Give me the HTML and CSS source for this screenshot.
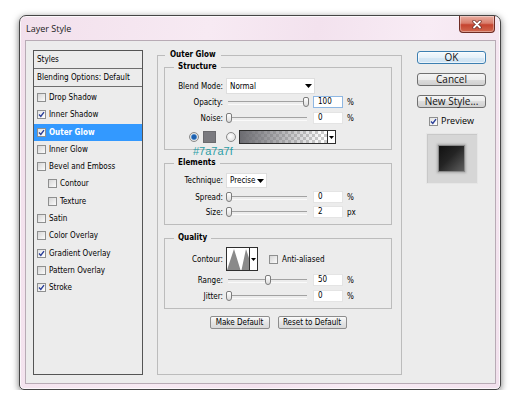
FILE: index.html
```html
<!DOCTYPE html>
<html>
<head>
<meta charset="utf-8">
<title>Layer Style</title>
<link rel="stylesheet" href="styles.css">
</head>
<body>
<div class="window">
  <div class="titlebar">
    <span class="title">Layer Style</span>
    <div class="close">
      <svg width="10" height="9" viewBox="0 0 10 9"><path d="M2 1.5 L8 7.5 M8 1.5 L2 7.5" stroke="#6a2a22" stroke-width="3.2" stroke-linecap="round"/><path d="M2 1.5 L8 7.5 M8 1.5 L2 7.5" stroke="#fff" stroke-width="1.8" stroke-linecap="round"/></svg>
    </div>
  </div>
  <div class="client">
    <div class="styles-panel">
      <div class="sp-head">Styles</div>
      <div class="sp-blend">Blending Options: Default</div>
      <div class="sp-list">
        <div class="sp-item"><span class="cb"></span>Drop Shadow</div>
        <div class="sp-item"><span class="cb on"><svg viewBox="0 0 7 7"><path d="M1 3.6 L2.8 5.4 L6 1.2" stroke="#2a3f9a" stroke-width="1.4" fill="none"/></svg></span>Inner Shadow</div>
        <div class="sp-item sel"><span class="cb on"><svg viewBox="0 0 7 7"><path d="M1 3.6 L2.8 5.4 L6 1.2" stroke="#2a3f9a" stroke-width="1.4" fill="none"/></svg></span>Outer Glow</div>
        <div class="sp-item"><span class="cb"></span>Inner Glow</div>
        <div class="sp-item"><span class="cb"></span>Bevel and Emboss</div>
        <div class="sp-item sub"><span class="cb"></span>Contour</div>
        <div class="sp-item sub"><span class="cb"></span>Texture</div>
        <div class="sp-item"><span class="cb"></span>Satin</div>
        <div class="sp-item"><span class="cb"></span>Color Overlay</div>
        <div class="sp-item"><span class="cb on"><svg viewBox="0 0 7 7"><path d="M1 3.6 L2.8 5.4 L6 1.2" stroke="#2a3f9a" stroke-width="1.4" fill="none"/></svg></span>Gradient Overlay</div>
        <div class="sp-item"><span class="cb"></span>Pattern Overlay</div>
        <div class="sp-item"><span class="cb on"><svg viewBox="0 0 7 7"><path d="M1 3.6 L2.8 5.4 L6 1.2" stroke="#2a3f9a" stroke-width="1.4" fill="none"/></svg></span>Stroke</div>
      </div>
    </div>

    <fieldset class="group main">
      <legend class="lg-main">Outer Glow</legend>

      <fieldset class="group subgroup structure">
        <legend>Structure</legend>
        <div class="row r-select">
          <span class="lbl">Blend Mode:</span>
          <div class="select blend"><span>Normal</span><svg width="7" height="4" viewBox="0 0 7 4"><path d="M0 0 H7 L3.5 4 Z" fill="#000"/></svg></div>
        </div>
        <div class="row r-num first">
          <span class="lbl">Opacity:</span>
          <div class="slider"><span class="thumb" style="left:77px"></span></div>
          <div class="num focus">100</div><span class="unit">%</span>
        </div>
        <div class="row r-num">
          <span class="lbl">Noise:</span>
          <div class="slider"><span class="thumb" style="left:0px"></span></div>
          <div class="num">0</div><span class="unit">%</span>
        </div>
        <div class="row r-color">
          <span class="radio on"></span>
          <span class="swatch"></span>
          <span class="radio"></span>
          <div class="grad"><span class="grad-fill"></span><span class="grad-arrow"><svg width="5" height="3" viewBox="0 0 5 3"><path d="M0 0 H5 L2.5 3 Z" fill="#000"/></svg></span></div>
        </div>
        <span class="hex">#7a7a7f</span>
      </fieldset>

      <fieldset class="group subgroup elements">
        <legend>Elements</legend>
        <div class="row r-select2">
          <span class="lbl">Technique:</span>
          <div class="select tech"><span>Precise</span><svg width="7" height="4" viewBox="0 0 7 4"><path d="M0 0 H7 L3.5 4 Z" fill="#000"/></svg></div>
        </div>
        <div class="row r-num first3">
          <span class="lbl">Spread:</span>
          <div class="slider"><span class="thumb" style="left:0px"></span></div>
          <div class="num">0</div><span class="unit">%</span>
        </div>
        <div class="row r-num first3">
          <span class="lbl">Size:</span>
          <div class="slider"><span class="thumb" style="left:0px"></span></div>
          <div class="num">2</div><span class="unit">px</span>
        </div>
      </fieldset>

      <fieldset class="group subgroup quality">
        <legend>Quality</legend>
        <div class="row r-contour">
          <span class="lbl">Contour:</span>
          <div class="contour">
            <span class="contour-img"><svg width="22" height="22" viewBox="0 0 22 22"><path d="M0 22 L7 1 L13.5 22 Z M14.5 22 L19 1 L22 10 L22 22 Z" fill="#8a8a8a"/></svg></span>
            <span class="contour-arrow"><svg width="5" height="3" viewBox="0 0 5 3"><path d="M0 0 H5 L2.5 3 Z" fill="#000"/></svg></span>
          </div>
          <span class="cb aa"></span><span class="aa-text">Anti-aliased</span>
        </div>
        <div class="row r-num first3">
          <span class="lbl">Range:</span>
          <div class="slider"><span class="thumb" style="left:39px"></span></div>
          <div class="num">50</div><span class="unit">%</span>
        </div>
        <div class="row r-num">
          <span class="lbl">Jitter:</span>
          <div class="slider"><span class="thumb" style="left:0px"></span></div>
          <div class="num">0</div><span class="unit">%</span>
        </div>
      </fieldset>

      <div class="defaults">
        <button class="btn-sm w60">Make Default</button>
        <button class="btn-sm w69">Reset to Default</button>
      </div>
    </fieldset>

    <div class="side">
      <button class="btn ok">OK</button>
      <button class="btn">Cancel</button>
      <button class="btn">New Style...</button>
      <div class="preview-row"><span class="cb on"><svg viewBox="0 0 7 7"><path d="M1 3.6 L2.8 5.4 L6 1.2" stroke="#2a3f9a" stroke-width="1.4" fill="none"/></svg></span><span>Preview</span></div>
      <div class="preview-box"><span class="preview-sq"></span></div>
    </div>
  </div>
</div>
</body>
</html>
```

FILE: styles.css
```css
* { box-sizing: border-box; }
html, body { margin: 0; padding: 0; background: #fff; }
body {
  font-family: "DejaVu Sans Condensed", "DejaVu Sans", sans-serif;
  font-size: 8px;
  color: #000;
  overflow: hidden;
}

.window {
  margin: 15px 0 0 19px;
  width: 482px;
  height: 375px;
  border: 1px solid #454545;
  border-radius: 7px 7px 5px 5px;
  background: linear-gradient(100deg, #f2e0ec 0%, #f7eaf3 35%, #f3e2ee 55%, #f8ecf5 75%, #f2e1ed 100%);
  box-shadow: 0 2px 7px rgba(0,0,0,0.55), inset 0 0 0 1px rgba(255,255,255,0.75);
  padding: 0 4px 5px 5px;
  display: flex;
  flex-direction: column;
}

.titlebar {
  height: 24px;
  flex: none;
  display: flex;
  align-items: flex-start;
}
.title {
  font-family: "Open Sans", sans-serif;
  font-size: 9px;
  line-height: 25px;
  color: #1a1a1a;
  padding-left: 1px;
}
.close {
  margin-left: auto;
  margin-right: 1px;
  width: 36px;
  height: 17px;
  border: 1px solid #6e2c24;
  border-top: none;
  border-radius: 0 0 4px 4px;
  background: linear-gradient(#e9aea2 0%, #d97d6b 45%, #c5432f 55%, #d1684f 100%);
  box-shadow: inset 0 0 0 1px rgba(255,255,255,0.35);
  display: flex;
  align-items: center;
  justify-content: center;
}
.close svg { display: block; }

.client {
  height: 344px;
  flex: none;
  background: #ececec;
  border: 1px solid #b8abb5;
  display: flex;
  align-items: stretch;
  padding: 9px 9px 8px 7px;
}

/* Styles list */
.styles-panel {
  width: 110px;
  flex: none;
  border: 1px solid #555;
  background: #ececec;
}
.sp-head, .sp-blend {
  height: 18px;
  border-bottom: 1px solid #6e6e6e;
  padding-left: 3px;
  line-height: 17px;
  white-space: nowrap;
}
.sp-list { padding-top: 2px; }
.sp-item {
  height: 17.27px;
  display: flex;
  align-items: center;
  gap: 3px;
  padding-left: 3px;
  white-space: nowrap;
}
.sp-item.sub { padding-left: 14px; }
.sp-item.sel { background: #3399ff; color: #fff; font-weight: bold; }

.cb {
  width: 9px;
  height: 9px;
  flex: none;
  border: 1px solid #8e8f8f;
  background: linear-gradient(135deg, #d6d6d6, #fbfbfb);
  display: flex;
  align-items: center;
  justify-content: center;
}
.cb.on { background: linear-gradient(135deg, #e4e4e4, #fff); }
.cb svg { width: 7px; height: 7px; display: block; }

/* group boxes */
.group {
  margin: 0;
  border: 1px solid #bcbcbc;
  min-width: 0;
}
.group legend {
  font-weight: bold;
  line-height: 10px;
  padding: 0 4px;
  margin-left: 9px;
}
.main {
  width: 245px;
  flex: none;
  margin-left: 14px;
  padding: 2px 9px 0 6px;
}
.main > legend.lg-main {
  padding: 0 5px;
  margin-left: 1px;
}
.subgroup {
  padding: 0 0 6px 0;
  position: relative;
}
.structure { padding-bottom: 5px; }
.elements, .quality { margin-top: 8px; }

.row { display: flex; align-items: center; }
.lbl {
  width: 58px;
  flex: none;
  text-align: right;
  margin-right: 3px;
  white-space: nowrap;
}
.r-select { margin-top: 6px; height: 16px; }
.r-select2 { margin-top: 5px; height: 15px; }
.r-num { height: 12px; margin-top: 4px; }
.r-num.first { margin-top: 2px; }
.r-num.first3 { margin-top: 3px; }
.r-color { margin-top: 6px; height: 14px; padding-left: 24px; }
.r-contour { margin-top: 4px; height: 24px; }

.select {
  background: #fff;
  border: 1px solid #dedede;
  display: flex;
  align-items: center;
  justify-content: space-between;
  padding: 0 2px 0 3px;
}
.select svg { display: block; }
.blend { width: 89px; height: 16px; }
.tech { width: 41px; height: 15px; }

.slider {
  width: 84px;
  height: 12px;
  flex: none;
  position: relative;
  margin-right: 3px;
}
.slider::before {
  content: "";
  position: absolute;
  left: 2px;
  right: 3px;
  top: 5px;
  height: 2px;
  border-top: 1px solid #a2a2a2;
  border-bottom: 1px solid #fafafa;
}
.thumb {
  position: absolute;
  top: 1px;
  width: 6px;
  height: 10px;
  border: 1px solid #7c7c7c;
  border-radius: 2px 2px 3px 3px;
  background: linear-gradient(#ffffff, #dcdcdc);
}

.num {
  width: 30px;
  height: 12px;
  flex: none;
  background: #fff;
  border: 1px solid #e4e4e4;
  padding-left: 4px;
  line-height: 10px;
}
.num.focus { border-color: #8fb7e2; }
.unit { margin-left: 4px; }

.radio {
  width: 10px;
  height: 10px;
  flex: none;
  border-radius: 50%;
  border: 1px solid #8a8a8a;
  background: radial-gradient(circle at 40% 40%, #ffffff, #d4d4d4);
}
.radio.on {
  background: radial-gradient(circle, #1c5fae 0 2px, #5e98d4 2.6px, #e6e6e6 3.4px, #cfcfcf);
}
.swatch {
  width: 13px;
  height: 12px;
  flex: none;
  margin: 0 10px 0 4px;
  background: #7a7a7f;
  border: 1px solid #6a6a6e;
}
.grad {
  width: 97px;
  height: 14px;
  flex: none;
  margin-left: 3px;
  border: 1px solid #2e2e2e;
  display: flex;
}
.grad-fill {
  flex: 1;
  background:
    linear-gradient(to right, #6c6c71 0%, rgba(122,122,127,0.6) 45%, rgba(122,122,127,0) 95%),
    repeating-conic-gradient(#cdcdcd 0 25%, #ffffff 0 50%) 0 0 / 6px 6px;
}
.grad-arrow {
  width: 8px;
  border-left: 1px solid #2e2e2e;
  background: #fff;
  display: flex;
  align-items: center;
  justify-content: center;
}
.grad-arrow svg, .contour-arrow svg { display: block; }

.hex {
  position: absolute;
  left: 28px;
  bottom: -8px;
  font-family: "Liberation Sans", sans-serif;
  font-size: 11px;
  line-height: 12px;
  color: #2b9ea6;
}

.contour {
  display: flex;
  height: 24px;
  border: 1px solid #2e2e2e;
  flex: none;
}
.contour-img { width: 22px; background: #fff; display: block; }
.contour-img svg { display: block; }
.contour-arrow {
  width: 8px;
  border-left: 1px solid #2e2e2e;
  background: #fff;
  display: flex;
  align-items: center;
  justify-content: center;
}
.cb.aa { margin-left: 11px; }
.aa-text { margin-left: 4px; }

.defaults {
  display: flex;
  justify-content: center;
  gap: 8px;
  margin-top: 7px;
}
.btn-sm {
  height: 13px;
  padding: 0;
  border: 1px solid #8d8d8d;
  border-radius: 2px;
  background: linear-gradient(#fbfbfb, #e6e6e6 50%, #d8d8d8);
  font: inherit;
  line-height: 11px;
  color: #000;
}
.w60 { width: 60px; }
.w69 { width: 69px; }

/* right side */
.side {
  width: 69px;
  flex: none;
  margin-left: 15px;
  margin-top: 1px;
  align-self: flex-start;
  display: flex;
  flex-direction: column;
  align-items: center;
}
.btn {
  width: 69px;
  height: 13px;
  padding: 0;
  margin-bottom: 9px;
  border: 1px solid #707070;
  border-radius: 3px;
  background: linear-gradient(#f4f4f4 0%, #ececec 50%, #dddddd 50%, #d0d0d0 100%);
  font-family: "Open Sans", sans-serif;
  font-size: 10px;
  line-height: 11px;
  color: #111;
}
.btn.ok {
  border-color: #3c7fb1;
  background: linear-gradient(#f3f9fd 0%, #e6f1f9 50%, #d7e8f5 50%, #cde2f2 100%);
  box-shadow: inset 0 0 0 1px rgba(255,255,255,0.6);
}
.btn:nth-of-type(3) { margin-bottom: 8px; }
.preview-row {
  height: 10px;
  display: flex;
  align-items: center;
  gap: 3px;
  font-family: "Open Sans", sans-serif;
  font-size: 9px;
  line-height: 10px;
}
.preview-box {
  margin-top: 7px;
  width: 52px;
  height: 51px;
  background: #d6d6d6;
  border: 1px solid #e6e6e6;
  box-shadow: inset 1px 1px 0 #c8c8c8;
  display: flex;
  align-items: center;
  justify-content: center;
}
.preview-sq {
  width: 27px;
  height: 27px;
  border: 1px solid #8a8a8a;
  background: linear-gradient(135deg, #111 0%, #242424 45%, #4a4a4a 80%, #5e5e5e 100%);
  box-shadow: 0 0 2px 1px rgba(140,140,140,0.6);
}
```
